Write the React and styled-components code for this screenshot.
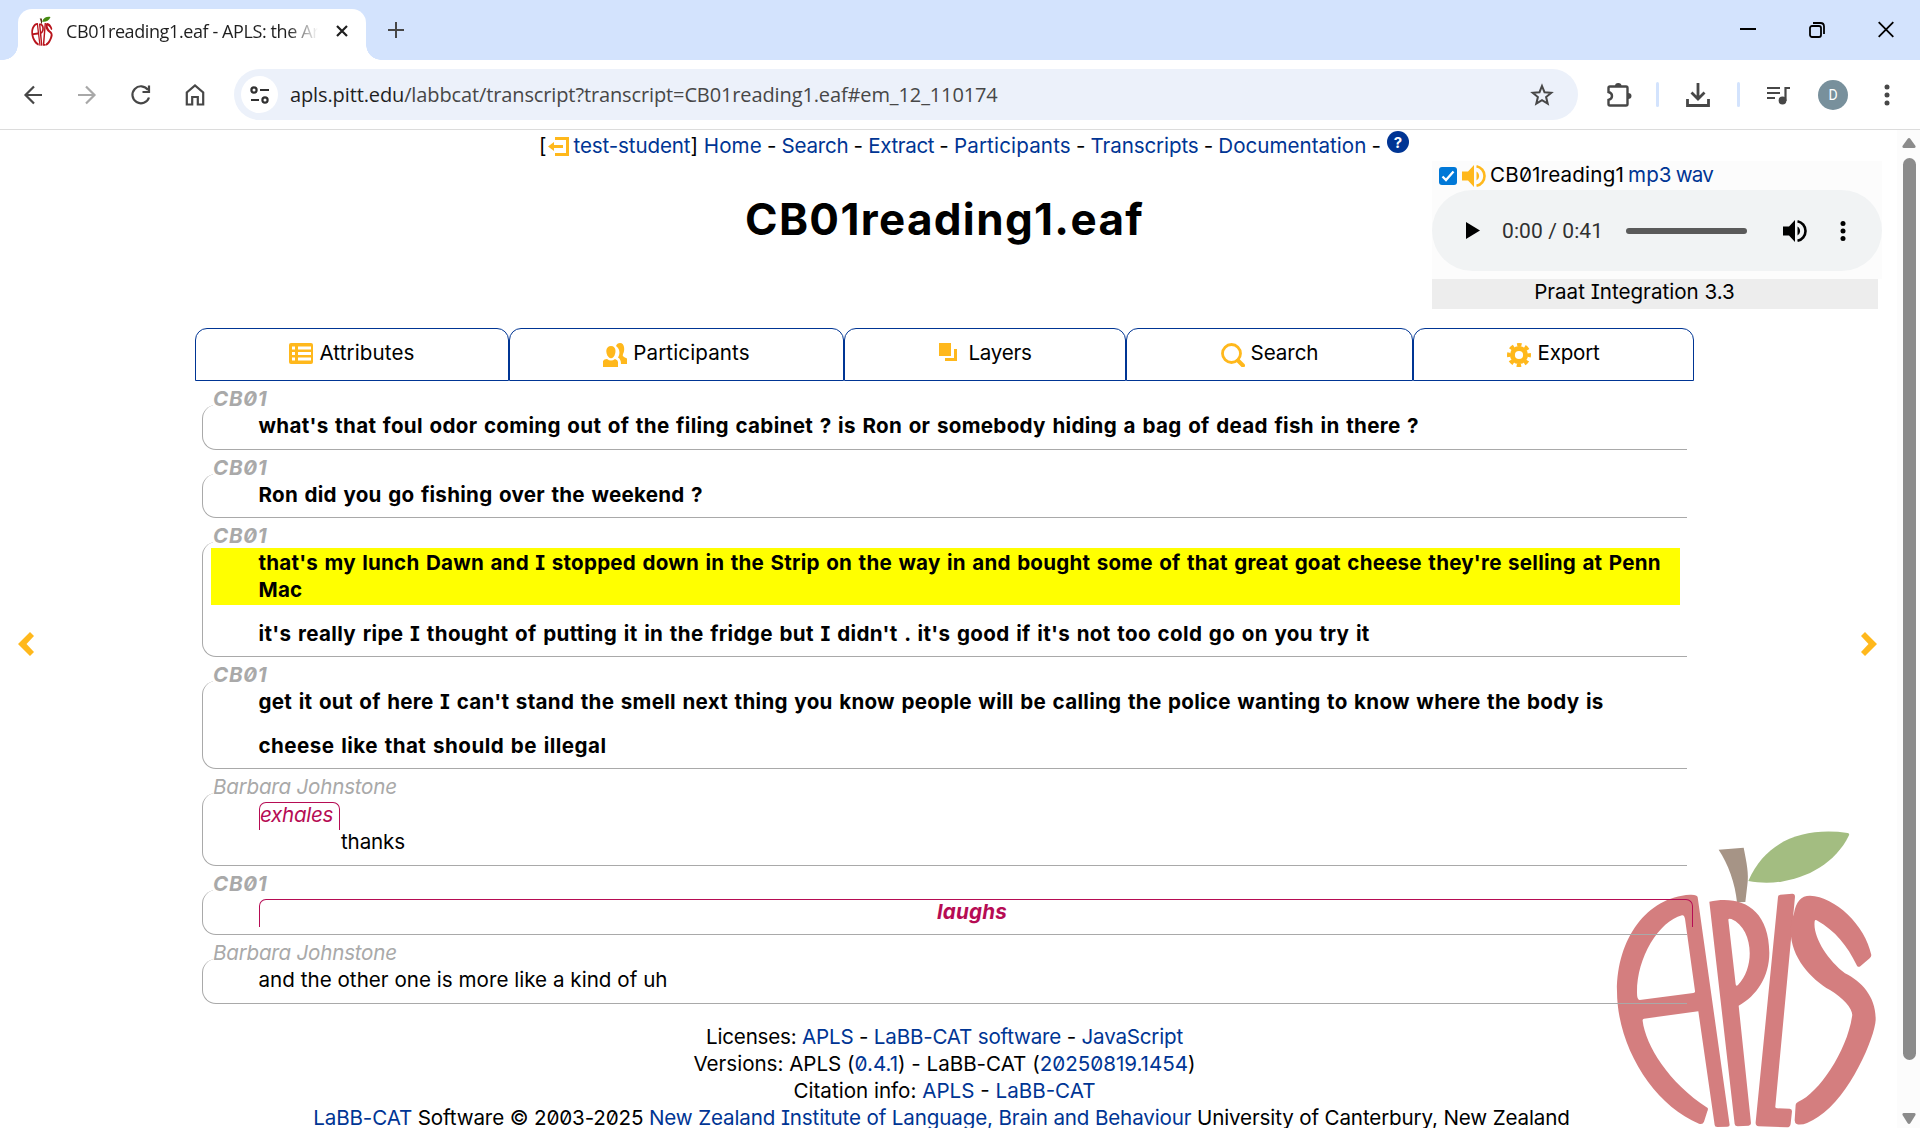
import React from "react";
import styled, { createGlobalStyle, css } from "styled-components";

const GlobalStyle = createGlobalStyle`
  * { box-sizing: border-box; }
  body { margin: 0; background: #fff; overflow: hidden; }
  svg { display: block; flex: none; }
`;

const link = "#003594";
const gold = "#ffb81c";
const grey = "#a9a9a9";
const noise = "#b60c54";

/* ---------- browser frame ---------- */

const Window = styled.div`
  width: 1920px;
  height: 1128px;
  display: flex;
  flex-direction: column;
  overflow: hidden;
  background: #fff;
`;

const TabStrip = styled.div`
  height: 60px;
  flex: none;
  background: #d3e3fd;
  display: flex;
  padding: 9px 0 0 18px;
`;

const BrowserTab = styled.div`
  position: relative;
  width: 348px;
  height: 51px;
  background: #fff;
  border-radius: 14px 14px 0 0;
  display: flex;
  align-items: center;
  padding: 0 18px 7px 13px;
  &::before,
  &::after {
    content: "";
    position: absolute;
    bottom: 0;
    width: 15px;
    height: 15px;
  }
  &::before {
    left: -15px;
    background: radial-gradient(circle at 0 0, transparent 14.5px, #fff 15px);
  }
  &::after {
    right: -15px;
    background: radial-gradient(circle at 100% 0, transparent 14.5px, #fff 15px);
  }
`;

const TabTitle = styled.div`
  font: 18px/26px "Open Sans", sans-serif;
  letter-spacing: -0.4px;
  color: #1f1f1f;
  width: 252px;
  margin: 0 auto 0 13px;
  white-space: nowrap;
  mask-image: linear-gradient(90deg, #000 88%, transparent 100%);
`;

const NewTab = styled.div`
  padding: 13px 0 0 22px;
`;

const WindowButtons = styled.div`
  margin-left: auto;
  display: flex;
  gap: 53px;
  padding: 12px 26px 0 0;
`;

const Toolbar = styled.div`
  height: 70px;
  flex: none;
  display: flex;
  align-items: center;
  border-bottom: 1px solid #dcdcdc;
  padding: 0 24px 0 21px;
`;

const NavButtons = styled.div`
  display: flex;
  gap: 30px;
  width: 213px;
`;

const AddressBar = styled.div`
  width: 1344px;
  height: 51px;
  border-radius: 26px;
  background: #ecf1fa;
  display: flex;
  align-items: center;
  padding: 0 24px 0 7px;
`;

const SiteInfo = styled.div`
  width: 37px;
  height: 37px;
  border-radius: 50%;
  background: #fff;
  display: grid;
  place-items: center;
`;

const Url = styled.div`
  font: 20px/28px "Open Sans", sans-serif;
  letter-spacing: -0.12px;
  color: #474747;
  margin: 0 auto 0 12px;
  white-space: nowrap;
`;

const Host = styled.span`
  color: #1f1f1f;
`;

const Extensions = styled.div`
  display: flex;
  align-items: center;
  gap: 27px;
  padding-left: 27px;
`;

const Separator = styled.div`
  width: 3px;
  height: 25px;
  border-radius: 2px;
  background: #d3e3fd;
  margin-left: ${(p) => (p.$near ? -3 : 0)}px;
`;

const Avatar = styled.div`
  width: 30px;
  height: 30px;
  margin-right: 9px;
  border-radius: 50%;
  background: #78909c;
  color: #fff;
  display: grid;
  place-items: center;
  font: 14px/1 Roboto, sans-serif;
`;

/* ---------- page ---------- */

const Page = styled.div`
  flex: 1;
  min-height: 0;
  display: flex;
  font: 20.6px/27px Inter, sans-serif;
  font-feature-settings: "zero", "cv08";
  color: #000;
`;

const Content = styled.div`
  position: relative;
  width: 1897px;
  overflow: hidden;
`;

const T = styled.span`
  white-space: pre;
  letter-spacing: ${(p) => p.$ls || 0}px;
`;

const A = styled(T)`
  color: ${link};
`;

const Header = styled.header`
  display: flex;
  height: 198px;
`;

const HeaderMain = styled.div`
  width: 1432px;
`;

const SiteNav = styled.nav`
  display: flex;
  align-items: flex-start;
  height: 29px;
  padding: 2px 0 0 539px;
`;

const Dash = styled.span`
  width: 19.7px;
  text-align: center;
`;

const LogoutIcon = styled.span`
  padding: 5px 5px 0 1px;
`;

const Help = styled.span`
  width: 22px;
  height: 22px;
  margin: -1px 0 0 1px;
  border-radius: 50%;
  background: ${link};
  color: #fff;
  display: grid;
  place-items: center;
  font: 700 15px/1 Inter, sans-serif;
`;

const Title = styled.h1`
  margin: 33px 0 0 745px;
  font: 700 44px/54px Inter, sans-serif;
  font-feature-settings: normal;
  letter-spacing: 1.35px;
`;

const Media = styled.aside`
  width: 450px;
  height: 118px;
  margin-top: 31px;
  background: #fcfcfc;
`;

const MediaRow = styled.div`
  display: flex;
  align-items: center;
  height: 29px;
  padding-left: 7px;
`;

const Check = styled.span`
  width: 18px;
  height: 18px;
  border-radius: 3px;
  background: #0078d7;
  display: grid;
  place-items: center;
  margin-right: 5px;
`;

const MediaName = styled.span`
  display: flex;
  gap: 4px;
  margin: -3px 0 0 4px;
`;

const Player = styled.div`
  height: 81px;
  border-radius: 41px;
  background: #f1f3f4;
  display: flex;
  align-items: center;
  padding: 0 36px 0 34px;
`;

const Time = styled.span`
  font: 21px/28px Roboto, sans-serif;
  letter-spacing: 0.1px;
  color: #303030;
  margin: 0 0 0 22px;
  width: 124px;
`;

const Track = styled.span`
  width: 121px;
  height: 6px;
  border-radius: 3px;
  background: #5a5a5a;
  margin-right: auto;
`;

const PlayerMenu = styled.span`
  margin-left: 33px;
`;

const Praat = styled.div`
  width: 446px;
  height: 30px;
  margin-top: 8px;
  padding-right: 41px;
  display: flex;
  justify-content: center;
  line-height: 26px;
  background: #ededed;
`;

const Body = styled.div`
  display: flex;
`;

const PageTurn = styled.div`
  width: ${(p) => (p.$next ? 203 : 195)}px;
  padding: 304px ${(p) => (p.$next ? "20px" : 0)} 0 ${(p) => (p.$next ? 0 : "18px")};
  display: flex;
  justify-content: ${(p) => (p.$next ? "flex-end" : "flex-start")};
  align-items: flex-start;
`;

const Main = styled.main`
  width: 1499px;
`;

const Tabs = styled.div`
  display: grid;
  grid-template-columns: 314px 335px 282px 287px 281px;
  height: 53px;
`;

const Tab = styled.div`
  border: 1px solid ${link};
  border-radius: 12px 12px 0 0;
  display: flex;
  align-items: flex-start;
  justify-content: center;
  gap: 6px;
  padding-top: 10px;
  svg { margin-top: 4px; }
`;

const Transcript = styled.div`
  padding: 0 7px;
`;

const Turn = styled.section`
  height: ${(p) => p.$h}px;
  display: flex;
  flex-direction: column;
  font-weight: ${(p) => (p.$main ? 700 : 400)};
  word-spacing: ${(p) => (p.$main ? 1.4 : 0)}px;
`;

const Speaker = styled.div`
  height: 24px;
  padding: 4px 0 0 11px;
  font-style: italic;
  color: ${grey};
  span { position: relative; background: #fff; line-height: 24px; }
`;

const Bubble = styled.div`
  flex: 1;
  border: 1px solid ${grey};
  border-width: 0 0 1px 1px;
  border-radius: 14px 0 0 14px;
  padding: 7px 7px 0 8px;
  display: flex;
  flex-direction: column;
`;

const Line = styled.div`
  flex: none;
  height: 27px;
  margin-top: ${(p) => p.$gap || 0}px;
  padding-left: 47.500px;
  display: flex;
  flex-direction: column;
  ${(p) => p.$marked && css`
    height: 57px;
    margin-top: -1px;
    background: #ff0;
    padding-top: 1px;
  `}
`;

const Noise = styled.div`
  flex: none;
  width: ${(p) => p.$w}px;
  height: 28px;
  margin: 2px 0 0 48px;
  border: 1px solid ${noise};
  border-bottom: 0;
  border-radius: 7px 7px 0 0;
  color: ${noise};
  font-style: italic;
  line-height: 24px;
  text-align: ${(p) => (p.$wide ? "center" : "left")};
  padding-right: ${(p) => (p.$wide ? 8 : 0)}px;
`;

const After = styled.div`
  padding-left: 130px;
  margin-top: -2px;
`;

const Footer = styled.footer`
  margin-top: 19px;
  display: flex;
  flex-direction: column;
  align-items: center;
`;

const FootLine = styled.div`
  white-space: nowrap;
  height: 27px;
  padding-right: ${(p) => p.$trail || 0}px;
`;

const Logo = styled.svg`
  position: absolute;
  left: 1590px;
  top: 680px;
`;

const Layer = styled.div`
  position: relative;
`;

const Scrollbar = styled.div`
  width: 23px;
  background: #fcfcfc;
  display: flex;
  flex-direction: column;
  align-items: center;
  padding: 8px 0 4px 1px;
`;

const Thumb = styled.div`
  width: 13px;
  height: 902px;
  margin: 10px 0 auto;
  border-radius: 7px;
  background: #8b8b8b;
`;

/* ---------- drawings ---------- */

const Svg = ({ w, h, vb, c = "#474747", s = 2.2, children }) => (
  <svg width={w} height={h} viewBox={vb || `0 0 ${w} ${h}`} fill="none" stroke={c} strokeWidth={s}>{children}</svg>
);

const Apple = ({ red, leaf, stem }) => (
  <>
    <path fill={leaf} d="M475 213C530 85 650 52 773 69Q779 70 777 76C725 185 590 235 475 213Z" />
    <path fill={stem} d="M386 119L461 113C470 160 477 190 472 225L466 276L441 277C436 222 414 160 386 119Z" />
    <g fill={red} fillRule="evenodd">
      <path d="M300 254Q322 253 323 262L419 945Q419 950 412 950L382 951Q374 951 374 945L325 604L162 626Q157 626 158 633C167 705 235 818 353 894Q355 898 352 904L342 935Q338 945 327 941C190 884 81 710 81 543C81 385 170 262 300 254ZM276 316C205 335 140 445 141 548Q141 570 149 570L310 549Q316 548 315 543L285 326Q282 314 276 316Z" />
      <path d="M358 275C450 255 537 292 538 428C538 500 500 557 446 587L483 940Q483 946 476 947L443 949Q435 949 434 942ZM415 329L437 523Q438 530 444 525C497 472 490 355 424 327Q415 324 415 329Z" />
      <path d="M564 261Q564 255 571 254L607 251Q615 251 615 260L556 889Q555 895 562 895L599 896Q606 897 606 904L602 941Q601 952 590 952L506 949Q496 948 497 937Z" />
      <path d="M612 310C618 275 633 257 660 257C735 260 826 345 844 435Q844 441 839 445L811 469Q805 473 801 467C770 405 738 365 680 331Q675 328 674 334C668 380 712 449 765 490C815 515 858 560 857 630C855 680 780 860 685 920Q640 950 620 942Q614 939 614 931L617 884Q617 879 625 875C685 850 770 725 786 620C792 600 762 565 720 540C650 500 575 410 612 310Z" />
    </g>
  </>
);

const Favicon = () => (
  <svg width="22" height="30" viewBox="70 40 800 920" preserveAspectRatio="none">
    <Apple red="#b8141c" leaf="#458a10" stem="#4d2a10" />
  </svg>
);

const Dots = ({ c, gap }) => (
  <svg width="6" height="28" viewBox="0 0 6 28" fill={c}>
    <circle cx="3" cy={14 - gap} r="2.5" /><circle cx="3" cy="14" r="2.5" /><circle cx="3" cy={14 + gap} r="2.5" />
  </svg>
);

const Volume = ({ c }) => (
  <svg width="24" height="24" viewBox="0 0 24 24" fill={c}>
    <path d="M0 7.5H6L12 1V23L6 16.5H0Z" />
    <path d="M14.5 7.5A5.2 5.2 0 0 1 14.5 16.5Z" />
    <path d="M14.5 2.2A10 10 0 0 1 14.5 21.8" fill="none" stroke={c} strokeWidth="2.6" />
  </svg>
);

const tabIcons = {
  attributes: (
    <svg width="24" height="24" viewBox="0 0 24 24">
      <rect y="0" width="24" height="21" rx="2" fill={gold} />
      <path d="M3 5H6M3 10.5H6M3 16H6M9 5H22M9 10.5H22M9 16H22" stroke="#fff" strokeWidth="3" />
    </svg>
  ),
  participants: (
    <svg width="24" height="24" viewBox="0 0 24 24" fill={gold}>
      <path d="M17 0C22 0 22 8 20 11Q19 13 21 14L24 15.500V21H18Q18 16 15 14.500C18 10 16 5 13 3Q14 0 17 0Z" />
      <path d="M8 3C13.500 3 13.500 10 10.500 14Q8 16.500 5.500 14C2 10 2.500 3 8 3Z" />
      <path d="M0 24V18Q1 16 4 16Q8 19 12 16Q15 17 15 19V24Z" />
    </svg>
  ),
  layers: (
    <svg width="24" height="24" viewBox="0 0 24 24">
      <path d="M0 0H12V13H0Z" fill={gold} />
      <path d="M16.500 6V16.500H6" stroke={gold} strokeWidth="3" fill="none" />
    </svg>
  ),
  search: (
    <svg width="24" height="24" viewBox="0 0 24 24" fill="none" stroke={gold}>
      <circle cx="10.500" cy="10.500" r="9" strokeWidth="2.800" />
      <path d="M17 17.500L22 22.500" strokeWidth="4" strokeLinecap="round" />
    </svg>
  ),
  export: (
    <svg width="24" height="24" viewBox="0 0 24 24" fill="none" stroke={gold}>
      <circle cx="12" cy="12" r="6.600" strokeWidth="5" />
      <circle cx="12" cy="12" r="10.300" strokeWidth="3.400" strokeDasharray="4.500 3.590" strokeDashoffset="2.250" />
    </svg>
  ),
};

const Chevron = ({ next }) => (
  <svg width="16" height="24" viewBox="0 0 16 24" fill={gold}>
    {next
      ? <path d="M4 0L16 12L4 24L0 20L7.500 12L0 4Z" />
      : <path d="M12 0L0 12L12 24L16 20L8.500 12L16 4Z" />}
  </svg>
);

/* ---------- data ---------- */

const tabs = [
  ["attributes", "Attributes", 0.1],
  ["participants", "Participants", 0.1],
  ["layers", "Layers", -0.29],
  ["search", "Search", -0.06],
  ["export", "Export", -0.23],
];

const menu = [
  ["Home", 0.07], ["Search", -0.22], ["Extract", -0.37],
  ["Participants", 0.15], ["Transcripts", -0.12], ["Documentation", 0],
];

const turns = [
  { h: 69, main: true, lines: [{ text: ["what's that foul odor coming out of the filing cabinet ? is Ron or somebody hiding a bag of dead fish in there ?"], ls: 0.31 }] },
  { h: 68, main: true, lines: [{ text: ["Ron did you go fishing over the weekend ?"], ls: 0.26 }] },
  { h: 139, main: true, lines: [
    { marked: true, text: ["that's my lunch Dawn and I stopped down in the Strip on the way in and bought some of that great goat cheese they're selling at Penn", "Mac"], ls: 0.21 },
    { gap: 15, text: ["it's really ripe I thought of putting it in the fridge but I didn't . it's good if it's not too cold go on you try it"], ls: 0.34 },
  ] },
  { h: 112, main: true, lines: [
    { text: ["get it out of here I can't stand the smell next thing you know people will be calling the police wanting to know where the body is"], ls: 0.275 },
    { gap: 17, text: ["cheese like that should be illegal"], ls: 0.45 },
  ] },
  { h: 97, noise: "exhales", noiseWidth: 81, after: "thanks" },
  { h: 69, main: true, noise: "laughs", noiseWidth: 1434 },
  { h: 69, lines: [{ text: ["and the other one is more like a kind of uh"], ls: 0.02 }] },
];

const footer = [
  { ls: -0.21, parts: ["Licenses: ", ["APLS"], " - ", ["LaBB-CAT software"], " - ", ["JavaScript"]] },
  { ls: -0.02, parts: ["Versions: APLS (", ["0.4.1"], ") - LaBB-CAT (", ["20250819.1454"], ")"] },
  { ls: 0.0, parts: ["Citation info: ", ["APLS"], " - ", ["LaBB-CAT"]] },
  { ls: -0.145, trail: 6, parts: [["LaBB-CAT"], " Software © 2003-2025 ", ["New Zealand Institute of Language, Brain and Behaviour"], " University of Canterbury, New Zealand"] },
];

const BrowserFrame = () => (
  <>
    <TabStrip>
      <BrowserTab>
        <Favicon />
        <TabTitle>CB01reading1.eaf - APLS: the Ar</TabTitle>
        <Svg w={12} h={12} c="#1f1f1f" s={2.2}><path d="M1 1L11 11M11 1L1 11" /></Svg>
      </BrowserTab>
      <NewTab><Svg w={16} h={16} s={2}><path d="M8 0V16M0 8H16" /></Svg></NewTab>
      <WindowButtons>
        <Svg w={16} h={17} c="#000" s={2}><path d="M0 8H16" /></Svg>
        <Svg w={16} h={17} c="#000" s={1.800}><rect x="1" y="5" width="11" height="11" rx="2" /><path d="M4 2H11.500Q15 2 15 5.500V13" /></Svg>
        <Svg w={16} h={17} c="#000" s={1.800}><path d="M.7 1.200L15.300 15.800M15.300 1.200L.7 15.800" /></Svg>
      </WindowButtons>
    </TabStrip>
    <Toolbar>
      <NavButtons>
        <Svg w={24} h={24}><path d="M21 12H5M13 3.500L4.500 12L13 20.500" /></Svg>
        <Svg w={24} h={24} c="#a8a8a8"><path d="M3 12H19M11 3.500L19.500 12L11 20.500" /></Svg>
        <Svg w={24} h={24}><path d="M19 7A8.500 8.500 0 1 0 20 14.500M20 2.500V9H13.500" /></Svg>
        <Svg w={24} h={24}><path d="M3.800 21.500V9.500L12 2.500L20.200 9.500V21.500H14.800V14H9.200V21.500Z" /></Svg>
      </NavButtons>
      <AddressBar>
        <SiteInfo>
          <Svg w={20} h={18} c="#303030"><circle cx="4" cy="4" r="2.600" /><path d="M10 4H19M1 14H9" /><circle cx="15" cy="14" r="2.600" /></Svg>
        </SiteInfo>
        <Url><Host>apls.pitt.edu</Host>/labbcat/transcript?transcript=CB01reading1.eaf#em_12_110174</Url>
        <Svg w={24} h={24} s={2}><path d="M12 3L14.500 9.200L21.300 9.700L16.100 14L17.700 20.700L12 17.100L6.300 20.700L7.900 14L2.700 9.700L9.500 9.200Z" /></Svg>
      </AddressBar>
      <Extensions>
        <Svg w={27} h={26} s={2.400}>
          <path d="M3.500 6Q3.500 4.500 5 4.500H21Q22.500 4.500 22.500 6V22Q22.500 23.500 21 23.500H5Q3.500 23.500 3.500 22V18Q7 17 7 14Q7 11 3.500 10Z" />
          <path fill="#474747" stroke="none" d="M10 4Q10 1 13.200 1Q16.500 1 16.500 4ZM23 11Q26.500 11 26.500 14T23 17Z" />
        </Svg>
        <Separator $near />
        <Svg w={24} h={24} s={2.800}><path d="M12 0V15M5.500 9.500L12 16L18.500 9.500M1.500 16V22.500H22.500V16" /></Svg>
        <Separator />
        <Svg w={24} h={20} s={2.200}><path d="M0 3H13M0 8H13M0 13H8M18.500 16V3H23" /><circle cx="15.500" cy="15.500" r="2.800" fill="#474747" /></Svg>
        <Avatar>D</Avatar>
        <Dots c="#474747" gap={8} />
      </Extensions>
    </Toolbar>
  </>
);

const PageHeader = () => (
  <Header>
    <HeaderMain>
      <SiteNav>
        <T>[</T>
        <LogoutIcon>
          <Svg w={21} h={19} c={gold} s={3}><path d="M7 1.500H19.500V17.500H7" /><path d="M4 9.500H15" /><path d="M0 9.500L6 5V14Z" fill={gold} stroke="none" /></Svg>
        </LogoutIcon>
        <A $ls={-0.13}>test-student</A><T>] </T>
        {menu.map(([name, ls]) => (
          <React.Fragment key={name}><A $ls={ls}>{name}</A><Dash>-</Dash></React.Fragment>
        ))}
        <Help>?</Help>
      </SiteNav>
      <Title>CB01reading1.eaf</Title>
    </HeaderMain>
    <Media>
      <MediaRow>
        <Check><Svg w={14} h={14} c="#fff" s={2.300}><path d="M1.500 7.500L5 11L12.500 2.500" /></Svg></Check>
        <Volume c={gold} />
        <MediaName><T $ls={0.18}>CB01reading1</T><A $ls={0.1}>mp3</A><A $ls={-0.8}>wav</A></MediaName>
      </MediaRow>
      <Player>
        <svg width="14" height="17" viewBox="0 0 14 17"><path d="M0 0L14 8.500L0 17Z" /></svg>
        <Time>0:00 / 0:41</Time>
        <Track />
        <Volume c="#000" />
        <PlayerMenu><Dots c="#000" gap={7.5} /></PlayerMenu>
      </Player>
      <Praat><T>Praat Integration 3.3</T></Praat>
    </Media>
  </Header>
);

const TurnView = ({ turn }) => (
  <Turn $h={turn.h} $main={turn.main}>
    <Speaker><T $ls={turn.main ? 0.7 : -0.22}>{turn.main ? "CB01" : "Barbara Johnstone"}</T></Speaker>
    <Bubble>
      {turn.noise && <Noise $w={turn.noiseWidth} $wide={turn.main}><T $ls={turn.main ? 0.2 : -0.3}>{turn.noise}</T></Noise>}
      {turn.after && <After><T $ls={-0.14}>{turn.after}</T></After>}
      {turn.lines && turn.lines.map((line, i) => (
        <Line key={i} $marked={line.marked} $gap={line.gap}>
          {line.text.map((t) => <T key={t} $ls={line.ls}>{t}</T>)}
        </Line>
      ))}
    </Bubble>
  </Turn>
);

export default function App() {
  return (
    <Window>
      <GlobalStyle />
      <BrowserFrame />
      <Page>
        <Content>
          <Logo width="330.33" height="318" viewBox="0 0 991 954">
            <Apple red="#d47e7f" leaf="#a3bd81" stem="#a69486" />
          </Logo>
          <Layer>
            <PageHeader />
            <Body>
              <PageTurn><Chevron /></PageTurn>
              <Main>
                <Tabs>
                  {tabs.map(([icon, name, ls]) => (
                    <Tab key={name}>{tabIcons[icon]}<T $ls={ls}>{name}</T></Tab>
                  ))}
                </Tabs>
                <Transcript>{turns.map((t, i) => <TurnView key={i} turn={t} />)}</Transcript>
                <Footer>
                  {footer.map((line, i) => (
                    <FootLine key={i} $trail={line.trail}>
                      {line.parts.map((p, j) => Array.isArray(p)
                        ? <A key={j} $ls={line.ls}>{p[0]}</A>
                        : <T key={j} $ls={line.ls}>{p}</T>)}
                    </FootLine>
                  ))}
                </Footer>
              </Main>
              <PageTurn $next><Chevron next /></PageTurn>
            </Body>
          </Layer>
        </Content>
        <Scrollbar>
          <svg width="14" height="10" viewBox="0 0 14 10"><path d="M5.500 1Q7 -1 8.500 1L13.500 8Q14 10 12 10H2Q0 10 .5 8Z" fill="#8b8b8b" /></svg>
          <Thumb />
          <svg width="14" height="11" viewBox="0 0 14 11"><path d="M5.500 10Q7 12 8.500 10L13.500 2Q14 0 12 0H2Q0 0 .5 2Z" fill="#8b8b8b" /></svg>
        </Scrollbar>
      </Page>
    </Window>
  );
}
